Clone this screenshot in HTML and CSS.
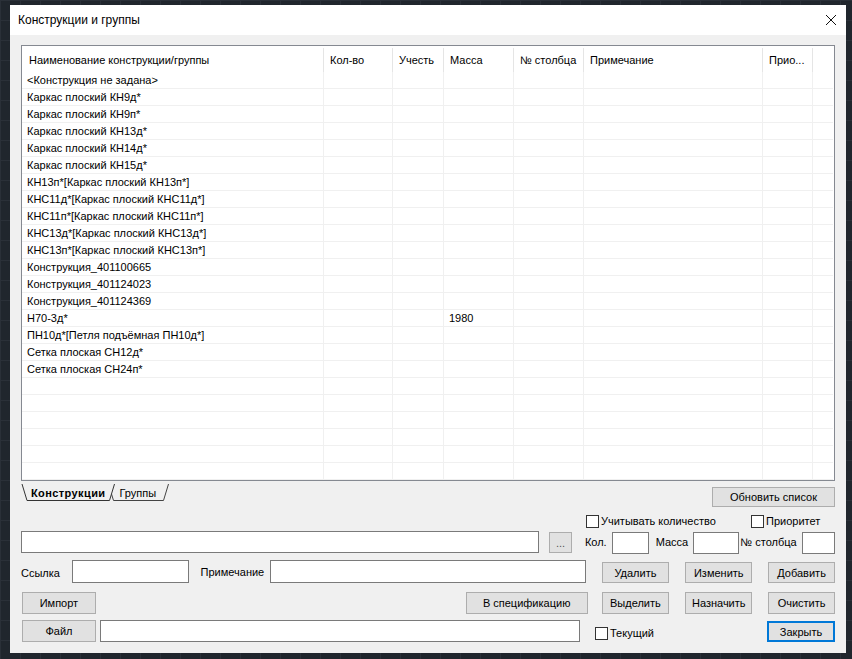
FILE: index.html
```html
<!DOCTYPE html>
<html lang="ru">
<head>
<meta charset="utf-8">
<title>Конструкции и группы</title>
<link rel="stylesheet" href="styles.css">
</head>
<body>
<div class="dialog">
  <div class="titlebar">
    <span class="title">Конструкции и группы</span>
    <svg class="close" width="12" height="12" viewBox="0 0 12 12"><path d="M1 1 L11 11 M11 1 L1 11" stroke="#111" stroke-width="1" fill="none"/></svg>
  </div>
  <div class="content">
    <div class="table">
      <div class="grid head">
        <div class="hc">Наименование конструкции/группы</div>
        <div class="hc">Кол-во</div>
        <div class="hc">Учесть</div>
        <div class="hc">Масса</div>
        <div class="hc">№ столбца</div>
        <div class="hc">Примечание</div>
        <div class="hc">Прио...</div>
        <div class="hc last"></div>
      </div>
      <div class="body" id="tbody"></div>
    </div>

    <div class="row row-a">
      <div class="tabs">
        <svg class="tabs-bg" width="160" height="21" viewBox="0 0 160 21">
          <path d="M90.5 13 L92.5 19.5 L142.5 19.5 L147.5 3" stroke="#444" fill="none"/>
          <path d="M1 3 L6 19.5 L88.5 19.5 L93.5 3" stroke="#333" fill="#f0f0f0"/>
        </svg>
        <span class="tab active">Конструкции</span>
        <span class="tab">Группы</span>
      </div>
      <button class="btn btn-refresh">Обновить список</button>
    </div>

    <div class="row row-b">
      <label class="chk chk-count"><span class="box"></span>Учитывать количество</label>
      <label class="chk"><span class="box"></span>Приоритет</label>
    </div>

    <div class="row row-c">
      <div class="input in-name"></div>
      <button class="btn btn-dots">...</button>
      <span class="lbl lbl-kol">Кол.</span>
      <div class="input in-kol"></div>
      <span class="lbl lbl-mass">Масса</span>
      <div class="input in-mass"></div>
      <span class="lbl lbl-col">№ столбца</span>
      <div class="input in-col"></div>
    </div>

    <div class="row row-d">
      <span class="lbl lbl-link">Ссылка</span>
      <div class="input in-link"></div>
      <span class="lbl lbl-note">Примечание</span>
      <div class="input in-note"></div>
      <button class="btn btn-a">Удалить</button>
      <button class="btn btn-b">Изменить</button>
      <button class="btn btn-c">Добавить</button>
    </div>

    <div class="row row-e">
      <button class="btn btn-left">Импорт</button>
      <button class="btn btn-spec">В спецификацию</button>
      <button class="btn btn-a">Выделить</button>
      <button class="btn btn-b">Назначить</button>
      <button class="btn btn-c">Очистить</button>
    </div>

    <div class="row row-f">
      <button class="btn btn-left">Файл</button>
      <div class="input in-file"></div>
      <label class="chk chk-cur"><span class="box"></span>Текущий</label>
      <button class="btn btn-close">Закрыть</button>
    </div>
  </div>
</div>
<script src="script.js"></script>
</body>
</html>
```

FILE: script.js
```js
var rows = [
  ["<Конструкция не задана>", ""],
  ["Каркас плоский КН9д*", ""],
  ["Каркас плоский КН9п*", ""],
  ["Каркас плоский КН13д*", ""],
  ["Каркас плоский КН14д*", ""],
  ["Каркас плоский КН15д*", ""],
  ["КН13п*[Каркас плоский КН13п*]", ""],
  ["КНС11д*[Каркас плоский КНС11д*]", ""],
  ["КНС11п*[Каркас плоский КНС11п*]", ""],
  ["КНС13д*[Каркас плоский КНС13д*]", ""],
  ["КНС13п*[Каркас плоский КНС13п*]", ""],
  ["Конструкция_401100665", ""],
  ["Конструкция_401124023", ""],
  ["Конструкция_401124369", ""],
  ["Н70-3д*", "1980"],
  ["ПН10д*[Петля подъёмная ПН10д*]", ""],
  ["Сетка плоская СН12д*", ""],
  ["Сетка плоская СН24п*", ""]
];
var tb = document.getElementById("tbody");
for (var i = 0; i < 24; i++) {
  var r = rows[i] || ["", ""];
  var g = document.createElement("div");
  g.className = "grid trow";
  var vals = [r[0], "", "", r[1], "", "", "", ""];
  for (var j = 0; j < 8; j++) {
    var c = document.createElement("div");
    c.className = "tc" + (j === 7 ? " last" : "");
    c.textContent = vals[j];
    g.appendChild(c);
  }
  tb.appendChild(g);
}
```

FILE: styles.css
```css
* { box-sizing: border-box; }
html, body { margin: 0; }
body {
  width: 852px;
  height: 659px;
  overflow: hidden;
  padding: 5px 6px 6px 10px;
  background-color: #20262d;
  background-image:
    linear-gradient(to right, #2a3038 1px, transparent 1px),
    linear-gradient(to bottom, #2a3038 1px, transparent 1px);
  background-size: 20px 20px;
  font-family: "Liberation Sans", Arial, sans-serif;
  font-size: 11px;
  color: #000;
}
.dialog {
  width: 836px;
  height: 648px;
  background: #f0f0f0;
  display: flex;
  flex-direction: column;
}
.titlebar {
  height: 30px;
  background: #fff;
  display: flex;
  align-items: center;
  padding: 0 9px 0 8px;
}
.title { font-size: 12px; flex: 1; }
.close { display: block; }
.content {
  padding: 10px 11px 0 11px;
}
.table {
  height: 436px;
  border: 1px solid #858991;
  background: #fff;
  overflow: hidden;
}
.grid {
  display: grid;
  grid-template-columns: 302px 69px 51px 70px 70px 179px 50px 1fr;
}
.head { height: 26px; }
.hc {
  border-right: 1px solid #e5e5e5;
  padding: 5px 0 0 6px;
  line-height: 14px;
  white-space: nowrap;
  overflow: hidden;
  margin-top: 2px;
}
.hc:first-child { padding-left: 7px; }
.hc.last { border-right: none; }
.trow { height: 17px; }
.tc {
  border-right: 1px solid #f0f0f0;
  border-bottom: 1px solid #f0f0f0;
  padding-left: 5px;
  line-height: 16px;
  white-space: nowrap;
  overflow: hidden;
}
.tc.last { border-right: none; margin-right: 1px; }

.row { display: flex; align-items: center; }
.row-a { height: 26px; align-items: flex-start; justify-content: space-between; }
.tabs {
  position: relative;
  width: 160px;
  height: 21px;
  display: flex;
  align-items: center;
}
.tabs-bg { position: absolute; left: 0; top: 0; }
.tab { position: relative; line-height: 14px; padding-top: 3px; }
.tab.active { font-weight: bold; margin-left: 10px; letter-spacing: 0.4px; }
.tab + .tab { margin-left: 14px; }

.btn {
  font-family: inherit;
  font-size: 11px;
  color: #000;
  background: #e1e1e1;
  border: 1px solid #adadad;
  padding: 0;
  height: 21px;
  margin: 0;
}
.btn-refresh { width: 123px; height: 20px; margin-top: 6px; margin-right: 0; }

.row-b { height: 15px; margin-top: 7px; padding-left: 565px; }
.chk { display: flex; align-items: center; line-height: 13px; }
.box {
  width: 13px;
  height: 13px;
  border: 1px solid #333;
  background: #fff;
  margin-right: 2px;
  flex: none;
}
.chk-count { width: 165px; }

.input {
  background: #fff;
  border: 1px solid #7a7a7a;
  height: 22px;
}
.row-c { height: 22px; margin-top: 2px; }
.in-name { width: 520px; }
.btn-dots { width: 23px; margin-left: 10px; margin-top: 1px; color: #555; }
.lbl { white-space: nowrap; }
.lbl-kol { margin-left: 13px; width: 27px; }
.in-kol { width: 37px; margin-top: 1px; }
.lbl-mass { margin-left: 7px; width: 37px; }
.in-mass { width: 47px; margin-top: 1px; }
.lbl-col { margin-left: 1px; width: 62px; }
.in-col { width: 33px; margin-top: 1px; }

.row-d { height: 23px; margin-top: 7px; }
.lbl-link { width: 51px; padding-top: 3px; }
.in-link { width: 117px; height: 23px; }
.lbl-note { margin-left: 12px; width: 70px; padding-top: 1px; }
.in-note { width: 316px; height: 23px; }
.row-d .btn { align-self: flex-end; }
.btn-a { width: 68px; margin-left: 16px; }
.btn-b { width: 67px; margin-left: 16px; }
.btn-c { width: 67px; margin-left: 16px; }

.row-e { height: 22px; margin-top: 9px; }
.row-e .btn { height: 22px; }
.btn-left { width: 74px; margin-left: 1px; height: 22px; }
.btn-spec { width: 122px; margin-left: 370px; }
.row-e .btn-a { margin-left: 14px; }

.row-f { height: 22px; margin-top: 6px; }
.in-file { width: 480px; margin-left: 4px; }
.chk-cur { margin-left: 15px; margin-top: 5px; }
.btn-close {
  width: 68px;
  margin-left: auto;
  border: 2px solid #0078d7;
  margin-top: 1px;
}
```
